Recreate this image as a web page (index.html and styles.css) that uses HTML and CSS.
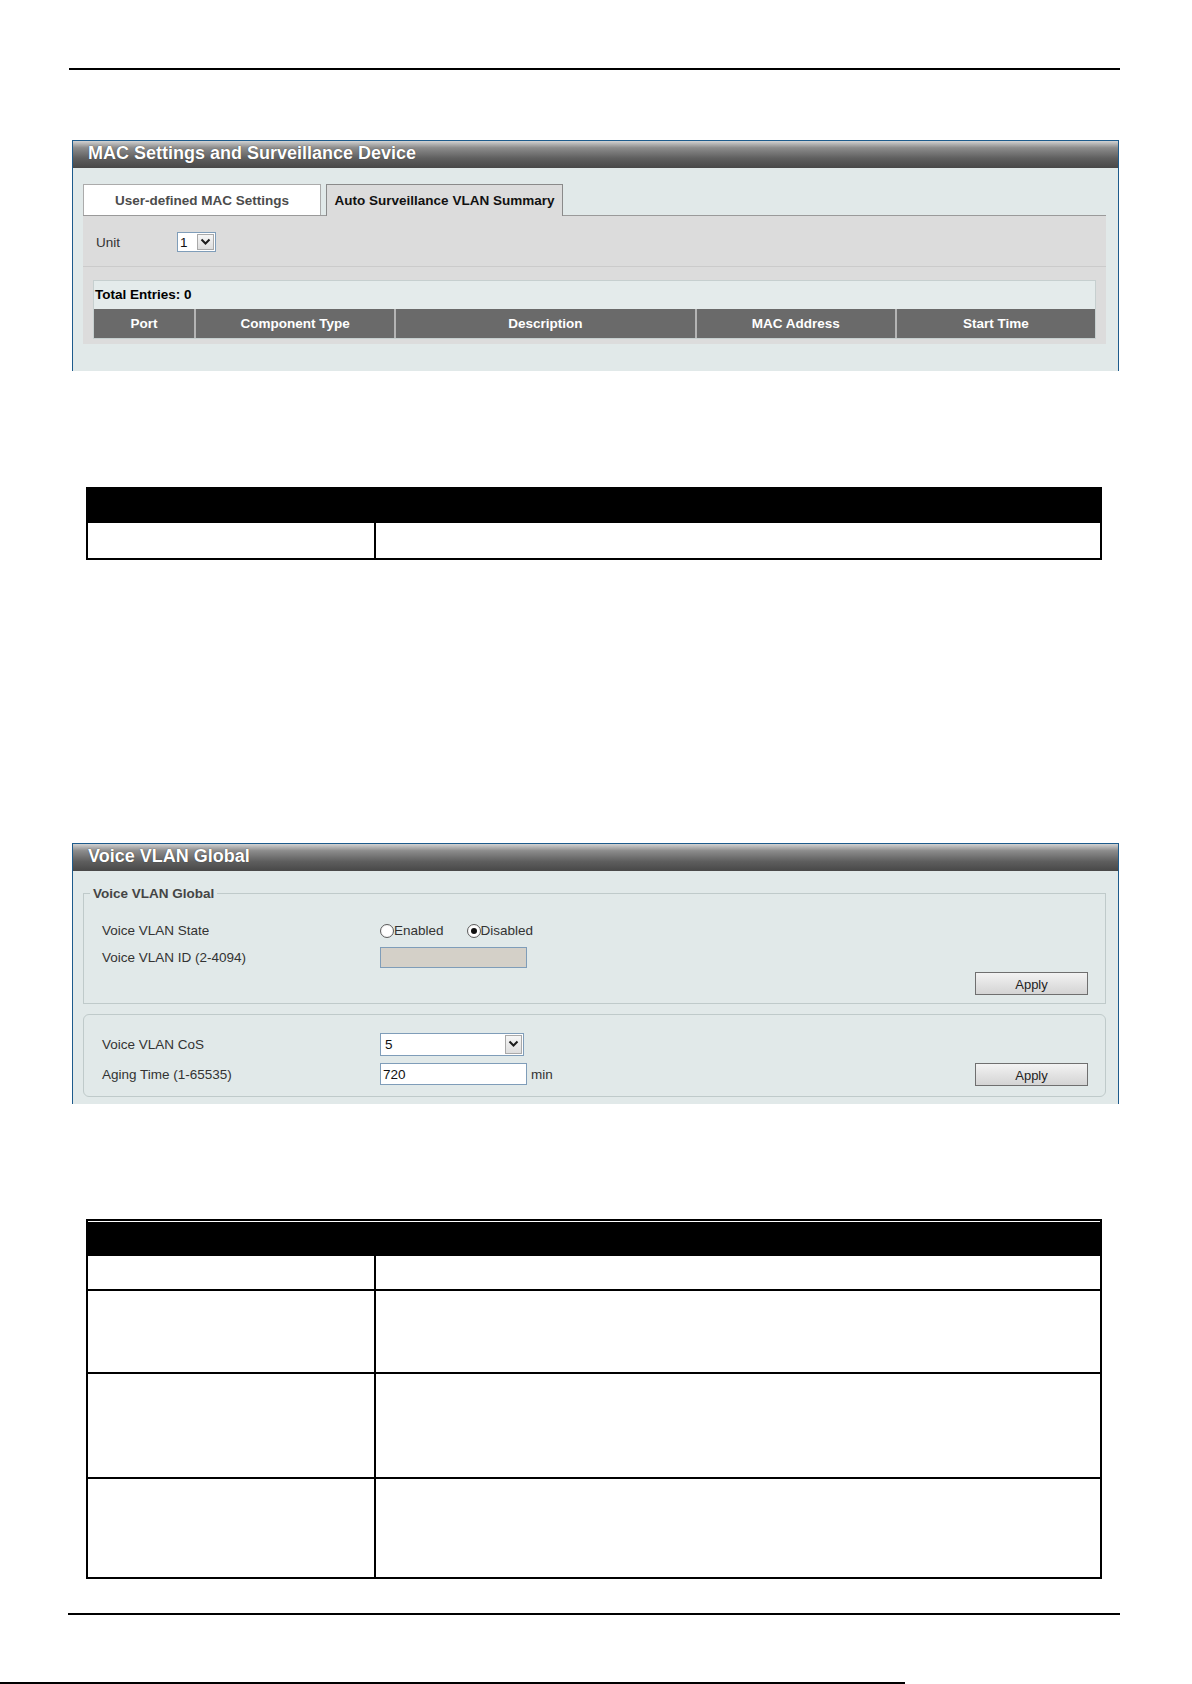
FILE: index.html
```html
<!DOCTYPE html>
<html lang="en">
<head>
    <meta charset="UTF-8">
    <title>Voice VLAN</title>
    <link rel="stylesheet" href="styles.css">
</head>
<body>
    <div class="page">
        <div class="rule"></div>

        <!-- MAC settings window -->
        <section class="panel panel-mac">
            <div class="panel-title">MAC Settings and Surveillance Device</div>
            <div class="panel-body">
                <div class="tabs">
                    <div class="tab">User-defined MAC Settings</div>
                    <div class="tab active">Auto Surveillance VLAN Summary</div>
                </div>
                <div class="tab-content">
                    <div class="unit-row">
                        <span class="unit-label">Unit</span>
                        <div class="select select-unit">
                            <span class="select-value">1</span>
                            <span class="select-btn">
                                <svg width="11" height="8" viewBox="0 0 11 8"><path d="M1.5 1.5 L5.5 5.5 L9.5 1.5" fill="none" stroke="#1c1c1c" stroke-width="2"/></svg>
                            </span>
                        </div>
                    </div>
                    <div class="entries">
                        <div class="entries-box">
                            <div class="entries-count">Total Entries: 0</div>
                            <div class="grid-head">
                                <div>Port</div>
                                <div>Component Type</div>
                                <div>Description</div>
                                <div>MAC Address</div>
                                <div>Start Time</div>
                            </div>
                        </div>
                    </div>
                </div>
            </div>
        </section>

        <div class="doc-table doc-table-short">
            <div class="doc-row doc-head"><div class="doc-cell"></div><div class="doc-cell"></div></div>
            <div class="doc-row row-a"><div class="doc-cell"></div><div class="doc-cell"></div></div>
        </div>

        <!-- Voice VLAN global window -->
        <section class="panel panel-voice">
            <div class="panel-title">Voice VLAN Global</div>
            <div class="panel-body">
                <fieldset class="fs">
                    <legend>Voice VLAN Global</legend>
                    <div class="form-row">
                        <span class="field-label">Voice VLAN State</span>
                        <label class="radio-opt"><span class="radio"></span>Enabled</label>
                        <label class="radio-opt"><span class="radio checked"></span>Disabled</label>
                    </div>
                    <div class="form-row">
                        <span class="field-label">Voice VLAN ID (2-4094)</span>
                        <span class="text-input disabled"></span>
                    </div>
                    <div class="btn-row">
                        <button class="btn">Apply</button>
                    </div>
                </fieldset>

                <fieldset class="fs fs-round">
                    <div class="form-row tall">
                        <span class="field-label">Voice VLAN CoS</span>
                        <div class="select select-cos">
                            <span class="select-value">5</span>
                            <span class="select-btn">
                                <svg width="11" height="8" viewBox="0 0 11 8"><path d="M1.5 1.5 L5.5 5.5 L9.5 1.5" fill="none" stroke="#1c1c1c" stroke-width="2"/></svg>
                            </span>
                        </div>
                    </div>
                    <div class="form-row tall">
                        <span class="field-label">Aging Time (1-65535)</span>
                        <span class="text-input">720</span>
                        <span class="unit-text">min</span>
                        <button class="btn push-right">Apply</button>
                    </div>
                </fieldset>
            </div>
        </section>

        <div class="doc-table doc-table-long">
            <div class="doc-row doc-head"><div class="doc-cell"></div><div class="doc-cell"></div></div>
            <div class="doc-row row-a"><div class="doc-cell"></div><div class="doc-cell"></div></div>
            <div class="doc-row row-b"><div class="doc-cell"></div><div class="doc-cell"></div></div>
            <div class="doc-row row-c"><div class="doc-cell"></div><div class="doc-cell"></div></div>
            <div class="doc-row row-d"><div class="doc-cell"></div><div class="doc-cell"></div></div>
        </div>

        <div class="rule rule-footer"></div>
    </div>
    <div class="sheet-edge"></div>
</body>
</html>
```

FILE: styles.css
```css
* {
    box-sizing: border-box;
}

html, body {
    margin: 0;
    padding: 0;
}

body {
    display: flex;
    flex-direction: column;
    height: 1684px;
    overflow: hidden;
    background-color: #fff;
    font-family: "Liberation Sans", Arial, sans-serif;
    color: #000;
}

.page {
    width: 1053px;
    margin-left: 68px;
    padding-top: 68px;
}

.rule {
    height: 2px;
    background-color: #000;
    margin: 0 1px;
}

.rule-footer {
    margin: 34px 1px 0 0;
}

/* cut edge of the next sheet */
.sheet-edge {
    flex-shrink: 0;
    width: 905px;
    height: 2px;
    margin-top: auto;
    background-color: #000;
}

/* window panels */
.panel {
    margin: 70px 2px 0 4px;
    border: 1px solid #1d5b8c;
    border-bottom: none;
    background-color: #e1e9e9;
}

.panel-voice {
    margin-top: 283px;
}

.panel-title {
    height: 27px;
    line-height: 25px;
    padding-left: 15px;
    background: linear-gradient(to bottom, #d2d2d2 0%, #8c8c8c 25%, #5e5e5e 65%, #484848 100%);
    color: #fff;
    font-size: 18px;
    font-weight: bold;
    text-shadow: 0 0 1px #2a2a2a;
}

.panel-mac .panel-body {
    padding: 16px 12px 27px 10px;
}

.panel-voice .panel-body {
    padding: 15px 12px 7px 10px;
}

/* tabs */
.tabs {
    display: flex;
    gap: 5px;
    border-bottom: 1px solid #9a9a9a;
}

.tab {
    width: 238px;
    height: 31px;
    display: flex;
    align-items: center;
    justify-content: center;
    border: 1px solid #ababab;
    border-bottom: none;
    background-color: #fff;
    color: #4c4c4c;
    font-size: 13.5px;
    font-weight: bold;
}

.tab.active {
    width: 237px;
    height: 32px;
    margin-bottom: -1px;
    border-color: #8a8a8a;
    background-color: #dcdcdc;
    color: #111;
}

.tab-content {
    background-color: #dcdcdc;
}

.unit-row {
    height: 51px;
    display: flex;
    align-items: center;
    padding: 2px 0 0 13px;
    border-bottom: 1px solid #cbcbcb;
    font-size: 13.5px;
    color: #333;
}

.unit-label {
    width: 81px;
}

/* drop-down boxes */
.select {
    display: flex;
    align-items: stretch;
    border: 1px solid #7f9db9;
    background-color: #fff;
    font-size: 13.5px;
    color: #111;
}

.select-value {
    flex-grow: 1;
    display: flex;
    align-items: center;
    padding-left: 2px;
}

.select-btn {
    width: 17px;
    margin: 1px;
    display: flex;
    align-items: center;
    justify-content: center;
    border: 1px solid #a9a9a9;
    background: linear-gradient(to bottom, #f6f6f6, #dedede);
}

.select-unit {
    width: 39px;
    height: 20px;
}

.select-cos {
    width: 144px;
    height: 23px;
}

.select-cos .select-value {
    padding-left: 4px;
}

/* entries table */
.entries {
    padding: 13px 10px 5px;
}

.entries-box {
    border: 1px solid #c6cfcf;
    background-color: #e4ebeb;
}

.entries-count {
    height: 28px;
    line-height: 28px;
    padding-left: 1px;
    font-size: 13.5px;
    font-weight: bold;
}

.grid-head {
    display: grid;
    grid-template-columns: 100fr 200fr 300fr 200fr 200fr;
    height: 29px;
    background-color: #6a6a6a;
}

.grid-head div {
    display: flex;
    align-items: center;
    justify-content: center;
    color: #fff;
    font-size: 13.5px;
    font-weight: bold;
}

.grid-head div + div {
    border-left: 2px solid #b4b4b4;
}

/* form groups */
.fs {
    margin: 0;
    padding: 16px 17px 8px 18px;
    border: 1px solid #bfcaca;
}

.fs legend {
    margin-left: -12px;
    padding: 0 3px;
    color: #454545;
    font-size: 13.5px;
    font-weight: bold;
}

.fs-round {
    margin-top: 10px;
    padding: 14px 17px 7px 18px;
    border-radius: 6px;
}

.form-row {
    height: 27px;
    display: flex;
    align-items: center;
    font-size: 13.5px;
    color: #333;
}

.form-row.tall {
    height: 30px;
}

.field-label {
    width: 278px;
}

.radio-opt {
    display: inline-flex;
    align-items: center;
    margin-right: 23px;
}

.radio {
    width: 14px;
    height: 14px;
    border-radius: 50%;
    border: 1px solid #5c5c5c;
    background: radial-gradient(circle, #fff 50%, #e6e6e6);
    display: flex;
    align-items: center;
    justify-content: center;
}

.radio.checked::after {
    content: "";
    width: 6px;
    height: 6px;
    border-radius: 50%;
    background-color: #111;
}

.text-input {
    width: 147px;
    height: 22px;
    display: flex;
    align-items: center;
    padding-left: 2px;
    border: 1px solid #7f9db9;
    background-color: #fff;
    color: #111;
}

.text-input.disabled {
    height: 21px;
    background-color: #d4d0c8;
}

.unit-text {
    margin-left: 4px;
}

.btn-row {
    display: flex;
    justify-content: flex-end;
    margin-top: 1px;
}

.btn {
    width: 113px;
    height: 23px;
    padding: 2px 0 0;
    border: 1px solid #6f6f6f;
    background: linear-gradient(to bottom, #f3f3f3, #e3e3e3 50%, #d4d4d4);
    color: #222;
    font-family: "Liberation Sans", Arial, sans-serif;
    font-size: 13px;
}

.push-right {
    margin-left: auto;
}

/* reference tables */
.doc-table {
    margin: 116px 19px 0 18px;
    border: 2px solid #000;
}

.panel-voice + .doc-table {
    margin-top: 115px;
}

.doc-row {
    display: grid;
    grid-template-columns: 286px 1fr;
}

.doc-row + .doc-row {
    border-top: 2px solid #000;
}

.doc-cell + .doc-cell {
    border-left: 2px solid #000;
}

.doc-head {
    height: 32px;
    background-color: #000;
}

.doc-table-long .doc-head {
    height: 33px;
    border-top: 1px solid #fff;
}

.doc-table-short .row-a {
    height: 37px;
}

.doc-table-long .row-a {
    height: 35px;
}

.row-b {
    height: 83px;
}

.row-c {
    height: 105px;
}

.row-d {
    height: 100px;
}
```
